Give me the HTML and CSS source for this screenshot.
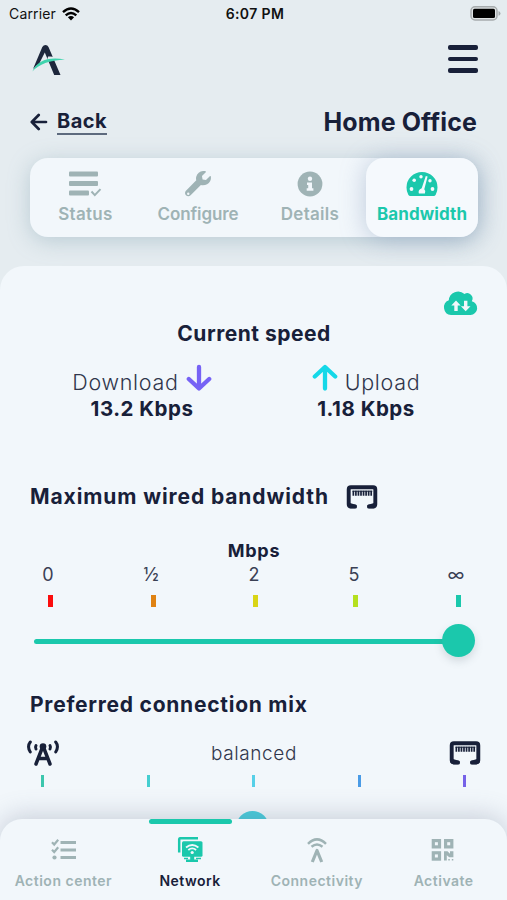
FILE: index.html
```html
<!DOCTYPE html>
<html lang="en">
<head>
  <meta charset="UTF-8" />
  <meta name="viewport" content="width=device-width, initial-scale=1.0"/>
  <title>Home Office - Bandwidth</title>
  <link rel="stylesheet" href="styles.css">
</head>
<body>

  <!-- Ethernet port, used twice -->
  <svg width="0" height="0" class="defs">
    <symbol id="port" viewBox="0 0 32 24">
      <path d="M9 21.500H4.800Q2.700 21.500 2.700 19.300V4.500Q2.700 2.300 4.900 2.300H27.100Q29.300 2.300 29.300 4.500V19.300Q29.300 21.500 27.200 21.500H23" fill="none" stroke="#182039" stroke-width="3.900" stroke-linecap="round"/>
      <path d="M4 18l6.500 2v3.200H4zM28 18l-6.500 2v3.200H28z" fill="#182039"/>
      <path d="M6.500 8.300h20" stroke="#182039" stroke-width="5" stroke-dasharray="1.700 .85"/>
      <path d="M6.500 6.200h19.800" stroke="#182039" stroke-width="1"/>
    </symbol>
  </svg>

  <div class="status-bar">
    <div class="carrier">
      <span>Carrier</span>
      <svg width="18" height="14" viewBox="0 0 18 14">
        <g fill="none" stroke="#000" stroke-width="2.400">
          <path d="M1 5.200Q9-2.200 17 5.200"/>
          <path d="M3.700 8.400Q9 3.500 14.300 8.400"/>
        </g>
        <path d="M5.900 10.300Q9 7.600 12.100 10.300L9 13.600z"/>
      </svg>
    </div>
    <div class="time">6:07 PM</div>
    <svg class="battery" width="31" height="15" viewBox="0 0 31 15">
      <rect x="1" y=".8" width="26" height="13.200" rx="4" fill="#dfe3e4" stroke="#a6abad" stroke-width="1.500"/>
      <rect x="3" y="2.800" width="22" height="9.200" rx="1.500"/>
      <path d="M28.500 5q2 .8 2 2.400t-2 2.400z" fill="#a6abad"/>
    </svg>
  </div>

  <header>
    <svg width="34" height="32" viewBox="0 0 34 32">
      <path d="M1 25L10.300 3Q11.500 1 13.500 1t3 2L28.500 31h-6.300L12.800 8.500 7 20Q3.500 22 1 25z" fill="#1d273c"/>
      <path d="M.4 28Q5 18.500 15 17L16 12.500Q25 12 33.300 15.600 8 13.800.4 28z" fill="#e5ecf0"/>
      <path d="M.3 27.500Q8 11 33 15.500 10 16.500.3 27.500z" fill="#3fd3ad"/>
    </svg>
    <div class="burger"><i></i><i></i><i></i></div>
  </header>

  <div class="title-row">
    <a class="back">
      <svg width="18" height="18" viewBox="0 0 18 18" fill="none" stroke="#182039" stroke-width="2.700" stroke-linecap="round" stroke-linejoin="round">
        <path d="M16 9H2M8.700 2L1.800 9l6.900 7"/>
      </svg>
      <span>Back</span>
    </a>
    <h1>Home Office</h1>
  </div>

  <div class="tabs">
    <div class="tab status">
      <svg width="33" height="26" viewBox="0 0 33 26" fill="#9fb3b5">
        <rect x="0" y=".5" width="29" height="5" rx="1"/>
        <rect x="0" y="10" width="29" height="5" rx="1"/>
        <rect x="0" y="19.500" width="20" height="5" rx="1"/>
        <path d="M22.500 20.500l3.300 3.600 5.700-6" fill="none" stroke="#9fb3b5" stroke-width="2"/>
      </svg>
      <span>Status</span>
    </div>
    <div class="tab configure">
      <svg width="26" height="26" viewBox="0 0 512 512" fill="#9fb3b5">
        <path fill-rule="evenodd" d="M508 109c-2-9-14-12-20-5l-75 74-67-11-12-68 75-74c7-7 4-18-5-21-81-20-162 28-183 110-6 24-5 49 1 70L19 387c-25 25-25 66 0 91s66 25 91 0l203-203c67 19 150-15 181-74 15-28 22-59 14-92zM64 472a24 24 0 1 1 0-48 24 24 0 0 1 0 48z"/>
      </svg>
      <span>Configure</span>
    </div>
    <div class="tab details">
      <svg width="26" height="26" viewBox="0 0 26 26">
        <circle cx="13" cy="13" r="12.400" fill="#9fb3b5"/>
        <circle cx="13" cy="7.800" r="2.200" fill="#f2f7fb"/>
        <path d="M10 11.400h5v5.800h1.400v2.500H9.700v-2.500h1.500v-3.300H10z" fill="#f2f7fb"/>
      </svg>
      <span>Details</span>
    </div>
    <div class="tab bandwidth active">
      <svg width="32" height="26" viewBox="0 0 32 26">
        <path d="M16 1A15.500 15.500 0 0 0 .5 16.500Q.5 20.500 2.300 23.800 3 25 4.300 25h23.400q1.300 0 2-1.200 1.800-3.300 1.800-7.300A15.500 15.500 0 0 0 16 1z" fill="#1bc8ac"/>
        <g fill="#f5f9fd">
          <circle cx="15" cy="5.800" r="1.700"/><circle cx="8.200" cy="9.300" r="1.800"/>
          <circle cx="5.500" cy="18" r="1.900"/><circle cx="26.500" cy="18" r="1.900"/>
          <circle cx="24" cy="9.800" r="1.700"/>
          <path d="M19.800 5l1.800.6-3.300 12.600q2 2 .6 4.300h-6q-1.300-3.500 2.800-5.300z"/>
        </g>
      </svg>
      <span>Bandwidth</span>
    </div>
  </div>

  <main class="panel">
    <svg class="cloud" width="35" height="26" viewBox="0 0 35 26">
      <path d="M8 25a7.700 7.700 0 0 1-2.200-14.800A9.400 9.400 0 0 1 21.500 4a5.300 5.300 0 0 1 7.300 7.200A7 7 0 0 1 27.500 25z" fill="#1bc8ac"/>
      <path d="M11.300 21v-5.500H8.300l4.700-5 4.700 5h-3V21zM21 10.700h3.400v5.500h3.100l-4.800 5-4.800-5H21z" fill="#f2f7fb"/>
    </svg>

    <h2 class="current">Current speed</h2>
    <div class="speeds">
      <div class="speed down">
        <div class="label">
          <span>Download</span>
          <svg width="26" height="28" viewBox="0 0 26 28" fill="none" stroke="#7662f5" stroke-width="4.300" stroke-linecap="round" stroke-linejoin="round">
            <path d="M13 4v21M2.800 16L13 25.500l10.200-9.500"/>
          </svg>
        </div>
        <b>13.2 Kbps</b>
      </div>
      <div class="speed up">
        <div class="label">
          <svg width="26" height="28" viewBox="0 0 26 28" fill="none" stroke="#15d8e8" stroke-width="4.300" stroke-linecap="round" stroke-linejoin="round">
            <path d="M13 25.500V4.500M2.800 13.500L13 4l10.200 9.500"/>
          </svg>
          <span>Upload</span>
        </div>
        <b>1.18 Kbps</b>
      </div>
    </div>

    <div class="wired">
      <h2>Maximum wired bandwidth</h2>
      <svg width="32" height="24"><use href="#port"/></svg>
    </div>

    <div class="unit">Mbps</div>
    <div class="marks">
      <span>0</span><span>½</span><span>2</span><span>5</span><span class="inf">∞</span>
    </div>
    <div class="ticks">
      <i class="red"></i><i class="orange"></i><i class="yellow"></i><i class="lime"></i><i class="green"></i>
    </div>
    <div class="slider"><div class="line"></div><div class="knob"></div></div>

    <h2 class="mix-title">Preferred connection mix</h2>
    <div class="mix">
      <svg width="32" height="26" viewBox="0 0 32 26" fill="none" stroke="#182039" stroke-linecap="round">
        <path d="M3.300 2Q-.2 6.500 3.300 12M28.700 2Q32.200 6.500 28.700 12" stroke-width="3"/>
        <path d="M9 5.500q-1 1.700 0 3.400M23 5.500q1 1.700 0 3.400" stroke-width="3"/>
        <path d="M16 6L9 24M16 6l7 18M11.500 18.500h9" stroke-width="3.500"/>
        <circle cx="16" cy="6.500" r="3.300" fill="#182039" stroke="none"/>
      </svg>
      <span>balanced</span>
      <svg width="32" height="24"><use href="#port"/></svg>
    </div>
    <div class="mix-ticks">
      <i class="t1"></i><i class="t2"></i><i class="t3"></i><i class="t4"></i><i class="t5"></i>
    </div>
    <div class="mix-knob"></div>
  </main>

  <nav>
    <div class="item action">
      <svg width="26" height="26" viewBox="0 0 26 26" fill="none" stroke="#9fb3b5">
        <path d="M10.500 5.500H26M10.500 13H26M10.500 20.500H26" stroke-width="2.900"/>
        <path d="M2 5.200l2.200 2.300 4-4.700M2 12.700L4.200 15l4-4.700" stroke-width="2.200"/>
        <circle cx="4.500" cy="20.500" r="2.100" fill="#9fb3b5" stroke="none"/>
      </svg>
      <span>Action center</span>
    </div>
    <div class="item network active">
      <svg width="26" height="26" viewBox="0 0 26 26">
        <path d="M2.200 15.500V2.300Q2.200 1.200 3.400 1.200H21" fill="none" stroke="#1bc8ac" stroke-width="2.500"/>
        <rect x="5" y="4.200" width="20.500" height="15.500" rx="1.500" fill="#1bc8ac"/>
        <path d="M13.200 19h4v3.500H21v2.500H9v-2.500h4.200z" fill="#1bc8ac"/>
        <path d="M7 21.500h4M19 21.500h5" stroke="#1bc8ac" stroke-width="1.500"/>
        <path d="M9 10.500q6.200-5 12.400 0M11.300 13q3.900-3.200 7.800 0" fill="none" stroke="#f2f7fb" stroke-width="1.800"/>
        <circle cx="15.200" cy="15.500" r="1.600" fill="#f2f7fb"/>
      </svg>
      <span>Network</span>
    </div>
    <div class="item connectivity">
      <svg width="26" height="26" viewBox="0 0 26 26" fill="none" stroke="#9fb3b5" stroke-width="2.500">
        <path d="M4 6.800Q13-2.200 22 6.800M7.500 9.800q5.500-4.600 11 0"/>
        <path d="M8.300 25L13 13.500 17.700 25" stroke-width="3.200" stroke-linejoin="round"/>
      </svg>
      <span>Connectivity</span>
    </div>
    <div class="item activate">
      <svg width="26" height="26" viewBox="0 0 26 26">
        <g fill="none" stroke="#9fb3b5" stroke-width="3.200">
          <rect x="2.300" y="3.600" width="6.200" height="6.300"/>
          <rect x="14.600" y="3.600" width="6.200" height="6.300"/>
          <rect x="2.300" y="15.800" width="6.200" height="6.300"/>
        </g>
        <path d="M13 14.300h3.500l2.500 2.500v-2.500h3.400v6h-4.100l-2.500-2v5.300H13zM17.300 22h1.500v1.500h-1.500zM20.800 22h1.500v1.500h-1.500z" fill="#9fb3b5"/>
      </svg>
      <span>Activate</span>
    </div>
  </nav>

</body>
</html>
```
FILE: styles.css
```css
* {
  box-sizing: border-box;
}

body {
  font-family: Inter, "Liberation Sans", sans-serif;
  margin: 0;
  height: 900px;
  overflow: hidden;
  position: relative;
  background: #e5ecf0;
  color: #182039;
}

svg {
  display: block;
  flex: none;
}

.defs {
  position: absolute;
}

h1, h2 {
  margin: 0;
}

h2 {
  font-size: 21px;
  line-height: 26px;
  font-weight: 700;
}

.status-bar {
  display: grid;
  grid-template-columns: 1fr auto 1fr;
  align-items: center;
  height: 27px;
  padding: 0 6px 0 9px;
  font-size: 14px;
  color: #111;
}

.carrier {
  display: flex;
  align-items: center;
  gap: 6px;
  letter-spacing: 0.15px;
}

.time {
  font-weight: 600;
  letter-spacing: 0.4px;
}

.battery {
  justify-self: end;
}

header {
  display: flex;
  justify-content: space-between;
  align-items: center;
  height: 66px;
  padding: 0 29px 0 32px;
}

.burger {
  display: flex;
  flex-direction: column;
  gap: 7px;
  width: 30px;
  margin-bottom: 2px;
}

.burger i {
  height: 4.500px;
  border-radius: 2px;
  background: #182039;
}

.title-row {
  display: flex;
  justify-content: space-between;
  align-items: center;
  height: 58px;
  padding: 0 30px;
}

.back {
  display: flex;
  align-items: center;
  gap: 9px;
}

.back span {
  font-size: 20px;
  line-height: 23px;
  font-weight: 700;
  letter-spacing: 0.5px;
  border-bottom: 2px solid #5d6a7e;
}

h1 {
  font-size: 25px;
  line-height: 30px;
  font-weight: 700;
  letter-spacing: 0.1px;
}

.tabs {
  display: flex;
  width: 448px;
  height: 79px;
  margin: 7px 0 29px 30px;
  border-radius: 18px;
  background: #f2f7fb;
  box-shadow: 0 4px 22px rgba(120, 155, 170, 0.4);
}

.tab {
  display: flex;
  flex-direction: column;
  align-items: center;
  width: 112px;
  padding-top: 13px;
  font-size: 17px;
  line-height: 22px;
  font-weight: 600;
  letter-spacing: 0.3px;
  color: #9fb3b5;
}

.tab span {
  margin-top: 6px;
}

.tab.status {
  padding-right: 1px;
}

.tab.configure {
  letter-spacing: -0.1px;
}

.tab.active {
  margin-left: auto;
  font-weight: 700;
  letter-spacing: 0.1px;
  color: #1bc8ac;
  border-radius: 18px;
  background: #f5f9fd;
  box-shadow: 0 2px 26px rgba(110, 135, 175, 0.4);
}

.panel {
  height: 634px;
  padding: 24px 29px 0 30px;
  border-radius: 24px 24px 0 0;
  background: #f2f7fb;
  position: relative;
}

.cloud {
  margin-left: auto;
}

.current {
  margin-top: 5px;
  letter-spacing: 0.5px;
  text-align: center;
}

.speeds {
  display: flex;
  margin-top: 16px;
}

.speed {
  display: flex;
  flex-direction: column;
  align-items: center;
  width: 224px;
}

.label {
  display: flex;
  gap: 7px;
  height: 34px;
  font-size: 21.500px;
  line-height: 39px;
  font-weight: 350;
  letter-spacing: 0.7px;
  color: #30364c;
}

.speed b {
  font-size: 20.500px;
  line-height: 24px;
  letter-spacing: 0.5px;
}

.wired {
  display: flex;
  align-items: center;
  gap: 17px;
  margin-top: 62px;
}

.wired h2 {
  padding-top: 1px;
  letter-spacing: 0.9px;
}

.unit {
  margin-top: 29px;
  font-size: 18px;
  line-height: 24px;
  font-weight: 700;
  letter-spacing: 0.7px;
  text-align: center;
}

.marks {
  display: grid;
  grid-template-columns: 103px 103px 100px 102px 36px;
  height: 24px;
  font-size: 18px;
  line-height: 23px;
  font-weight: 400;
  color: #3a4054;
}

.marks span {
  width: 36px;
  text-align: center;
}

.ticks {
  display: grid;
  grid-template-columns: 103px 102px 100px 103px 5px;
  margin: 8px 0 0 18px;
}

.ticks i {
  width: 5px;
  height: 12px;
}

.red { background: #fb0d0d; }
.orange { background: #df8213; }
.yellow { background: #d9d516; }
.lime { background: #b5e01f; }
.green { background: #1bc8ac; }

.slider {
  display: flex;
  align-items: center;
  height: 33px;
  margin: 17px 3px 0 4px;
}

.line {
  flex: 1;
  height: 5px;
  margin: 2px -2px 0 0;
  border-radius: 3px 0 0 3px;
  background: #1bc8ac;
}

.knob {
  width: 33px;
  height: 33px;
  border-radius: 50%;
  background: #1bc8ac;
  box-shadow: 0 4px 8px rgba(80, 100, 110, 0.2);
}

.mix-title {
  margin-top: 35px;
  letter-spacing: 0.75px;
}

.mix {
  display: flex;
  justify-content: space-between;
  align-items: center;
  height: 26px;
  margin: 22px -3px 0 -3px;
  font-size: 19px;
  font-weight: 350;
  letter-spacing: 0.6px;
  color: #30364c;
}

.mix-ticks {
  display: flex;
  justify-content: space-between;
  margin: 9px 12px 0 11px;
}

.mix-ticks i {
  width: 3px;
  height: 12px;
}

.t1 { background: #3cc6ad; }
.t2 { background: #45ced0; }
.t3 { background: #56d0e8; }
.t4 { background: #4a9be6; }
.t5 { background: #7662e8; }

.mix-knob {
  width: 33px;
  height: 33px;
  margin: 24px 0 0 206px;
  border-radius: 50%;
  background: #45ccdb;
}

nav {
  position: absolute;
  left: 0;
  right: 0;
  bottom: 0;
  display: flex;
  height: 81px;
  border-radius: 22px 22px 0 0;
  background: #f2f7fb;
  box-shadow: 0 -3px 26px rgba(100, 110, 140, 0.3);
}

.item {
  position: relative;
  display: flex;
  flex-direction: column;
  align-items: center;
  width: 127px;
  padding-top: 18px;
  font-size: 14px;
  line-height: 20px;
  font-weight: 600;
  letter-spacing: 0.5px;
  color: #9fb3b5;
}

.item span {
  margin-top: 8px;
}

.item.active {
  color: #182039;
}

.item.active::before {
  content: "";
  position: absolute;
  top: 0;
  left: 22px;
  width: 83px;
  height: 5px;
  border-radius: 3px;
  background: #1bc8ac;
}
```
